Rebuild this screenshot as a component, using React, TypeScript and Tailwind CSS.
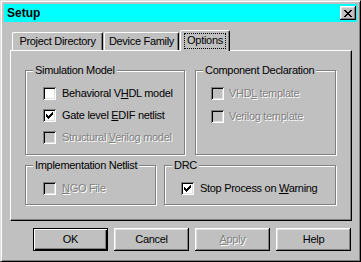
import React from "react";

const bevelOut =
  "shadow-[inset_-1px_-1px_0_#000,inset_1px_1px_0_#fff,inset_-2px_-2px_0_#808080,inset_2px_2px_0_#dfdfdf]";

const CheckBox = ({ checked, disabled }: { checked?: boolean; disabled?: boolean }) => (
  <div
    className={`flex h-[13px] w-[13px] shrink-0 items-center justify-center shadow-[inset_1px_1px_0_#808080,inset_-1px_-1px_0_#fff,inset_2px_2px_0_#000,inset_-2px_-2px_0_#dfdfdf] ${
      disabled ? "bg-[#c0c0c0]" : "bg-white"
    }`}
  >
    {checked && (
      <svg width="7" height="7" viewBox="0 0 7 7" shapeRendering="crispEdges">
        <path
          d="M6 0h1v1h-1z M5 1h2v1h-2z M0 2h1v1H0z M4 2h3v1H4z M0 3h2v1H0z M3 3h3v1H3z M0 4h5v1H0z M1 5h3v1H1z M2 6h1v1H2z"
          fill="#000"
        />
      </svg>
    )}
  </div>
);

const Option = ({
  checked,
  disabled,
  gap = "gap-[6px]",
  children,
}: {
  checked?: boolean;
  disabled?: boolean;
  gap?: string;
  children: React.ReactNode;
}) => (
  <div className={`flex h-[13px] items-center ${gap}`}>
    <CheckBox checked={checked} disabled={disabled} />
    <span
      className={`whitespace-nowrap ${
        disabled ? "text-[#808080] [text-shadow:1px_1px_0_#fff]" : "text-black"
      }`}
    >
      {children}
    </span>
  </div>
);

const Group = ({
  title,
  className,
  children,
}: {
  title: string;
  className: string;
  children?: React.ReactNode;
}) => (
  <div
    className={`relative border border-[#808080] shadow-[inset_1px_1px_0_#fff,1px_1px_0_#fff] ${className}`}
  >
    <span className="absolute -top-[7px] left-[7px] bg-[#c0c0c0] px-[2px] whitespace-nowrap">
      {title}
    </span>
    {children}
  </div>
);

const Tab = ({ label, width, ml }: { label: string; width: string; ml: string }) => (
  <div
    className={`flex h-[18px] items-center justify-center rounded-t-[2px] border-l border-t border-r border-l-white border-t-white border-r-black shadow-[inset_-1px_0_0_#808080] ${width} ${ml}`}
  >
    {label}
  </div>
);

const Button = ({
  children,
  isDefault,
  disabled,
}: {
  children: React.ReactNode;
  isDefault?: boolean;
  disabled?: boolean;
}) => (
  <div
    className={`flex h-[23px] w-[75px] items-center justify-center ${
      isDefault
        ? "border border-black shadow-[inset_1px_1px_0_#fff,inset_-1px_-1px_0_#000,inset_-2px_-2px_0_#808080]"
        : bevelOut
    } ${disabled ? "text-[#808080] [text-shadow:1px_1px_0_#fff]" : "text-black"}`}
  >
    {children}
  </div>
);

export default function App() {
  return (
    <div className="h-[262px] w-[361px] bg-[#c0c0c0] font-['Liberation_Sans',Arial,sans-serif] text-[11px] leading-[13px] tracking-[-0.3px] text-black">
      <div className="flex h-full flex-col border border-t-[#dfdfdf] border-l-[#dfdfdf] border-r-black border-b-black p-[3px] shadow-[inset_1px_1px_0_#fff,inset_-1px_-1px_0_#808080]">
        {/* title bar */}
        <div className="flex h-[18px] items-center justify-between bg-[#00ffff] pl-[3px] pr-[1px]">
          <span className="text-[12px] font-bold tracking-normal">Setup</span>
          <div className={`flex h-[14px] w-[16px] items-center justify-center bg-[#c0c0c0] ${bevelOut}`}>
            <svg width="8" height="7" viewBox="0 0 8 7" shapeRendering="crispEdges">
              <path
                d="M0 0h2v1H0z M6 0h2v1H6z M1 1h2v1H1z M5 1h2v1H5z M2 2h4v1H2z M3 3h2v1H3z M2 4h4v1H2z M1 5h2v1H1z M5 5h2v1H5z M0 6h2v1H0z M6 6h2v1H6z"
                fill="#000"
              />
            </svg>
          </div>
        </div>

        <div className="pl-[6px] pr-[5px] pt-[8px]">
          {/* tabs */}
          <div className="flex h-[20px] items-end">
            <Tab label="Project Directory" width="w-[91px]" ml="ml-[2px]" />
            <Tab label="Device Family" width="w-[75px]" ml="ml-[1px]" />
            <div className="relative z-10 mb-[-1px] ml-[1px] flex h-[21px] w-[50px] items-start justify-center rounded-t-[2px] border-l border-t border-r border-l-white border-t-white border-r-black bg-[#c0c0c0] pt-[2px] shadow-[inset_-1px_0_0_#808080]">
              <span className="border border-dotted border-black px-[2px] pb-[1px]">Options</span>
            </div>
          </div>

          {/* panel */}
          <div className="h-[171px] border border-t-white border-l-white border-r-black border-b-black pl-[14px] pt-[19px] shadow-[inset_-1px_-1px_0_#808080]">
            <div className="flex gap-[10px]">
              <Group title="Simulation Model" className="h-[85px] w-[160px]">
                <div className="flex flex-col gap-[9px] pl-[17px] pt-[16px]">
                  <Option>
                    Behavioral V<span className="underline">H</span>DL model
                  </Option>
                  <Option checked>
                    Gate level <span className="underline">E</span>DIF netlist
                  </Option>
                  <Option disabled>
                    Structural <span className="underline">V</span>erilog model
                  </Option>
                </div>
              </Group>
              <Group title="Component Declaration" className="h-[85px] w-[141px]">
                <div className="flex flex-col gap-[10px] pl-[15px] pt-[16px]">
                  <Option disabled gap="gap-[5px]">
                    VHD<span className="underline">L</span> template
                  </Option>
                  <Option disabled gap="gap-[5px]">
                    Verilog template
                  </Option>
                </div>
              </Group>
            </div>
            <div className="mt-[10px] flex gap-[8px]">
              <Group title="Implementation Netlist" className="h-[40px] w-[131px]">
                <div className="pl-[17px] pt-[16px]">
                  <Option disabled>
                    <span className="underline">N</span>GO File
                  </Option>
                </div>
              </Group>
              <Group title="DRC" className="h-[40px] w-[172px]">
                <div className="pl-[16px] pt-[16px]">
                  <Option checked>
                    Stop Process on <span className="underline">W</span>arning
                  </Option>
                </div>
              </Group>
            </div>
          </div>
        </div>

        {/* buttons */}
        <div className="mt-[7px] flex justify-end gap-[6px] pr-[6px]">
          <Button isDefault>OK</Button>
          <Button>Cancel</Button>
          <Button disabled>
            <span className="underline">A</span>pply
          </Button>
          <Button>Help</Button>
        </div>
      </div>
    </div>
  );
}
